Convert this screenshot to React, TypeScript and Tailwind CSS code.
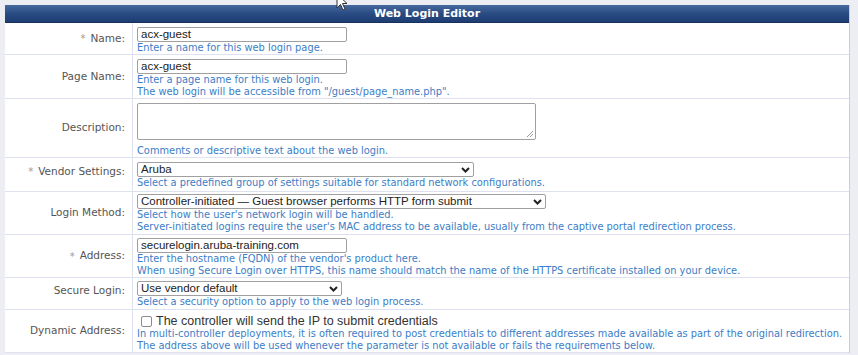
import React from "react";

const VF = { fontFamily: '"DejaVu Sans", Verdana, sans-serif' };
const AF = { fontFamily: '"Liberation Sans", Arial, sans-serif' };

function Chevron() {
  return (
    <svg width="9" height="6" viewBox="0 0 9 6" className="shrink-0">
      <path d="M1 1 L4.5 4.5 L8 1" fill="none" stroke="#222" strokeWidth="2" />
    </svg>
  );
}

function TextBox({ value, w }: { value: string; w: string }) {
  return (
    <div
      className={`${w} h-[15px] border border-[#a0a0a0] rounded-[2px] bg-white pl-[3px] text-[11.5px] leading-[13px] text-[#222] overflow-hidden whitespace-nowrap`}
      style={AF}
    >
      {value}
    </div>
  );
}

function SelectBox({ value, w }: { value: string; w: string }) {
  return (
    <div
      className={`${w} h-[15px] border border-[#a0a0a0] rounded-[2px] bg-white pl-[3px] pr-[3px] flex items-center justify-between text-[11.5px] leading-[13px] text-[#222] whitespace-nowrap overflow-hidden`}
      style={AF}
    >
      <span>{value}</span>
      <Chevron />
    </div>
  );
}

function Help({ lines }: { lines: string[] }) {
  return (
    <div className="text-[9.85px] leading-[12px] text-[#3c7dc6] whitespace-nowrap" style={VF}>
      {lines.map((l, i) => (
        <div key={i}>{l}</div>
      ))}
    </div>
  );
}

function Row({
  label,
  req,
  h,
  pt,
  labelShift,
  children,
}: {
  label: string;
  req?: boolean;
  h: string;
  pt: string;
  labelShift?: string;
  children: React.ReactNode;
}) {
  return (
    <div className={`grid grid-cols-[128px_1fr] ${h} border-b border-[#dde2ee]`}>
      <div
        className={`flex items-center justify-end pr-[7px] border-r border-[#dde2ee] text-[10.5px] text-[#555] ${labelShift ?? ""}`}
        style={VF}
      >
        {req && <span className="text-[#999] mr-[5px] text-[10px]">*</span>}
        <span>{label}</span>
      </div>
      <div className={`pl-[4px] ${pt} flex flex-col`}>{children}</div>
    </div>
  );
}

export default function App() {
  return (
    <div className="relative w-[858px] h-[355px] overflow-hidden bg-[#eceef4] pt-[5px] pl-[5px]">
      <svg
        className="absolute left-[336px] top-[-7px]"
        width="13"
        height="19"
        viewBox="0 0 13 19"
      >
        <path
          d="M1 1 L1 15 L4.5 11.5 L7 17 L9 16 L6.5 10.5 L11 10.5 Z"
          fill="#fff"
          stroke="#333"
          strokeWidth="1"
        />
      </svg>
      <div className="w-[845px] bg-white border-r border-[#c9cede]">
        <div
          className="h-[18px] bg-gradient-to-b from-[#46699f] via-[#2a4c84] to-[#1d3d72] border-b border-[#17315c] text-white font-bold text-[11px] leading-[17px] text-center"
          style={VF}
        >
          Web Login Editor
        </div>

        <Row label="Name:" req h="h-[32px]" pt="pt-[4px]">
          <TextBox value="acx-guest" w="w-[210px]" />
          <Help lines={["Enter a name for this web login page."]} />
        </Row>

        <Row label="Page Name:" h="h-[44px]" pt="pt-[4px]">
          <TextBox value="acx-guest" w="w-[210px]" />
          <Help
            lines={[
              "Enter a page name for this web login.",
              'The web login will be accessible from "/guest/page_name.php".',
            ]}
          />
        </Row>

        <Row label="Description:" h="h-[59px]" pt="pt-[4px]">
          <div className="relative w-[399px] h-[37px] border border-[#a0a0a0] rounded-[2px] bg-white mb-[5px]">
            <svg className="absolute right-[1px] bottom-[1px]" width="8" height="8" viewBox="0 0 8 8">
              <path d="M7 1 L1 7 M7 4 L4 7" stroke="#999" strokeWidth="1" />
            </svg>
          </div>
          <Help lines={["Comments or descriptive text about the web login."]} />
        </Row>

        <Row label="Vendor Settings:" req h="h-[34px]" pt="pt-[4px]" labelShift="pb-[6px]">
          <SelectBox value="Aruba" w="w-[337px]" />
          <Help lines={["Select a predefined group of settings suitable for standard network configurations."]} />
        </Row>

        <Row label="Login Method:" h="h-[43px]" pt="pt-[2px]">
          <SelectBox value="Controller-initiated — Guest browser performs HTTP form submit" w="w-[409px]" />
          <Help
            lines={[
              "Select how the user's network login will be handled.",
              "Server-initiated logins require the user's MAC address to be available, usually from the captive portal redirection process.",
            ]}
          />
        </Row>

        <Row label="Address:" req h="h-[43px]" pt="pt-[3px]">
          <TextBox value="securelogin.aruba-training.com" w="w-[210px]" />
          <Help
            lines={[
              "Enter the hostname (FQDN) of the vendor's product here.",
              "When using Secure Login over HTTPS, this name should match the name of the HTTPS certificate installed on your device.",
            ]}
          />
        </Row>

        <Row label="Secure Login:" h="h-[32px]" pt="pt-[3px]" labelShift="pb-[6px]">
          <SelectBox value="Use vendor default" w="w-[205px]" />
          <Help lines={["Select a security option to apply to the web login process."]} />
        </Row>

        <Row label="Dynamic Address:" h="h-[43px]" pt="pt-[4px]">
          <div className="flex items-center h-[14px] pl-[4px]">
            <div className="w-[11px] h-[11px] border border-[#8a8a8a] rounded-[2px] bg-white mr-[4px]" />
            <span className="text-[12.5px] leading-[14px] text-[#333]" style={AF}>
              The controller will send the IP to submit credentials
            </span>
          </div>
          <Help
            lines={[
              "In multi-controller deployments, it is often required to post credentials to different addresses made available as part of the original redirection.",
              "The address above will be used whenever the parameter is not available or fails the requirements below.",
            ]}
          />
        </Row>
      </div>
    </div>
  );
}
